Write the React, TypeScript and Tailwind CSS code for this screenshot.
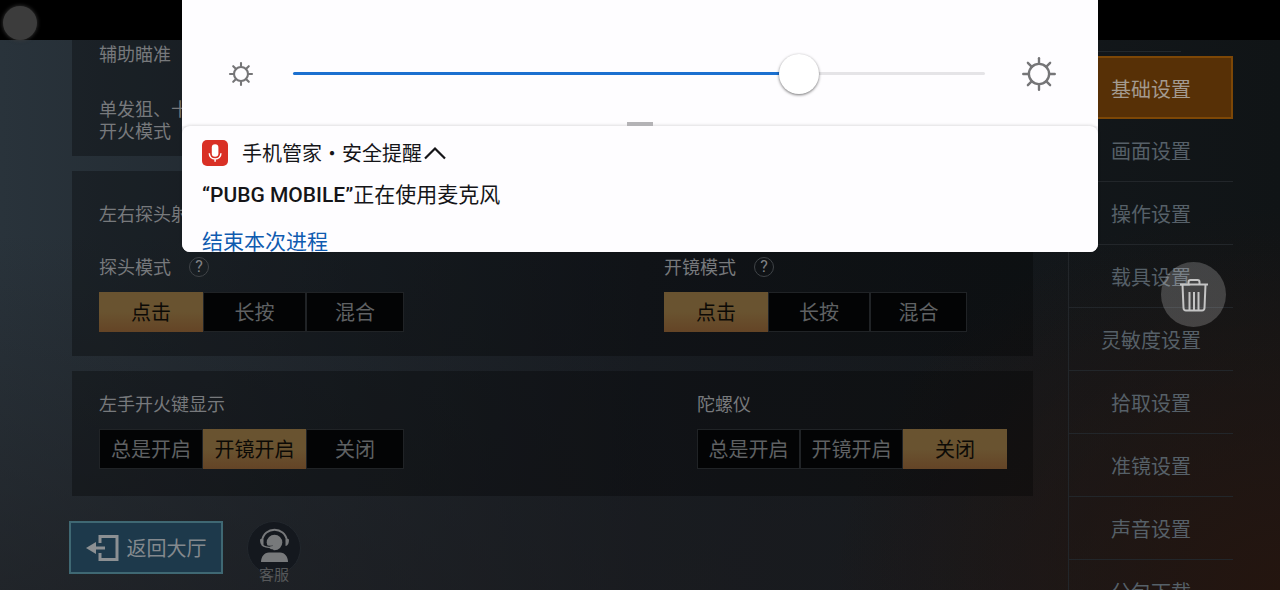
import { useState } from "react";

const tabs = ["基础设置", "画面设置", "操作设置", "载具设置", "灵敏度设置", "拾取设置", "准镜设置", "声音设置", "分包下载"];

const rays = [0, 45, 90, 135, 180, 225, 270, 315];

function Sun({ className, r, inner, outer }: { className: string; r: number; inner: number; outer: number }) {
  return (
    <svg viewBox="-16 -16 32 32" className={className} fill="none" stroke="#757577" strokeWidth="2.1" aria-hidden="true">
      <circle r={r} />
      {rays.map((a) => (
        <path key={a} d={`M0 ${-inner}V${-outer}`} transform={`rotate(${a})`} strokeLinecap="round" />
      ))}
    </svg>
  );
}

function Help() {
  return (
    <button
      type="button"
      aria-label="帮助"
      className="flex h-5 w-5 items-center justify-center rounded-full border border-[#3f4347] text-[16px] leading-none text-[#808285]"
    >
      ?
    </button>
  );
}

type SegmentProps = { label: string; help?: boolean; options: string[]; initial: number; widths?: string[] };

function Segment({ label, help, options, initial, widths = ["w-26", "w-[103px]", "w-[98px]"] }: SegmentProps) {
  const [value, setValue] = useState(initial);

  return (
    <div role="group" aria-label={label}>
      <div className="flex h-6 items-center gap-[18px] text-[18px] text-[#77797c]">
        <span>{label}</span>
        {help && <Help />}
      </div>
      <div className="mt-[13px] flex h-10 text-[20px]">
        {options.map((option, i) => (
          <button
            key={option}
            type="button"
            aria-pressed={value === i}
            onClick={() => setValue(i)}
            className={`pt-[2px] ${widths[i]} ${
              value === i
                ? "bg-linear-to-b from-[#695330] via-[#695330] to-[#644426] text-[#0c0a06]"
                : "border border-[#202326] bg-[#030405] text-[#5f6163]"
            }`}
          >
            {option}
          </button>
        ))}
      </div>
    </div>
  );
}

function BrightnessPanel() {
  const [level, setLevel] = useState(190);

  return (
    <div className="flex h-[126px] flex-col bg-[#fefdff]">
      <div className="mt-[54px] flex h-10 items-center pl-[43px] pr-[41px]">
        <Sun className="h-8 w-8" r={7} inner={7} outer={11} />
        <div className="relative mx-9 h-10 flex-1">
          <div className="absolute inset-x-0 top-[18px] h-[3px] rounded-full bg-[#e5e4e7]" />
          <div
            className="absolute left-0 top-[18px] h-[3px] rounded-full bg-[#1b70d0]"
            style={{ width: `${(level / 255) * 100}%` }}
          />
          <input
            type="range"
            aria-label="亮度"
            min={0}
            max={255}
            value={level}
            onChange={(e) => setLevel(Number(e.target.value))}
            className="absolute inset-0 h-10 w-full appearance-none bg-transparent [&::-webkit-slider-thumb]:h-10 [&::-webkit-slider-thumb]:w-10 [&::-webkit-slider-thumb]:appearance-none [&::-webkit-slider-thumb]:rounded-full [&::-webkit-slider-thumb]:bg-white [&::-webkit-slider-thumb]:shadow-[0_1px_3px_rgba(0,0,0,0.55)]"
          />
        </div>
        <Sun className="h-9 w-9" r={9} inner={9} outer={14} />
      </div>
      <div className="mx-auto mt-auto h-1 w-[26px] bg-[#b4b3b6]" />
    </div>
  );
}

function Notification() {
  return (
    <section className="h-[126px] overflow-hidden rounded-lg bg-[#fefdff] px-5 text-[#151518] shadow-[0_-1px_3px_rgba(0,0,0,0.12)]">
      <div className="mt-[13px] flex h-7 items-center">
        <svg viewBox="0 0 26 26" className="mr-[14px] h-[26px] w-[26px]" aria-hidden="true">
          <rect width="26" height="26" rx="5" fill="#d93025" />
          <rect x="9.8" y="4.2" width="6.6" height="12.6" rx="3.3" fill="#fff" />
          <path d="M7.3 13.2c0 3.6 2.5 5.8 5.8 5.8s5.8-2.2 5.8-5.8M13.1 19v2.8" fill="none" stroke="#fff" strokeWidth="1.5" />
        </svg>
        <span className="pt-[2px] text-[20px]">手机管家・安全提醒</span>
        <button type="button" aria-label="收起" className="ml-[2px]">
          <svg viewBox="0 0 22 14" className="h-[14px] w-[22px]" fill="none" stroke="currentColor" strokeWidth="2.2">
            <path d="M1 12.500 11 2.500l10 10" />
          </svg>
        </button>
      </div>
      <h2 className="mt-[14px] h-7 text-[21px] leading-7">
        <span className="font-medium">“PUBG MOBILE”</span>正在使用麦克风
      </h2>
      <a href="#end" className="mt-[19px] block h-7 text-[21px] leading-7 text-[#0f5bb0]">结束本次进程</a>
    </section>
  );
}

export default function App() {
  const [tab, setTab] = useState(0);

  return (
    <div className="relative flex h-screen flex-col overflow-hidden bg-linear-to-r from-[#29333b] via-[#171c22] via-50% to-[#101416] font-[Roboto,'Noto_Sans_CJK_SC',sans-serif]">
      <header className="h-10 shrink-0 bg-black" />

      <div className="flex min-h-0 flex-1 bg-[radial-gradient(ellipse_35%_70%_at_100%_100%,#24150f,transparent),linear-gradient(to_bottom,transparent_35%,#1b1b1e99)]">
        <main className="ml-[72px] mr-[35px] flex flex-1 flex-col gap-[15px]">
          <section className="h-[116px] shrink-0 bg-black/30 px-[27px] pt-[3px] text-[18px] text-[#77797c]">
            <p className="leading-6">辅助瞄准</p>
            <p className="mt-8 leading-[22px]">单发狙、十字弩<br />开火模式</p>
          </section>

          <section className="h-[185px] shrink-0 bg-black/30 px-[27px] pt-8">
            <p className="h-6 text-[18px] leading-6 text-[#77797c]">左右探头射击</p>
            <div className="mt-7 flex justify-between pr-[39px]">
              <Segment label="探头模式" help options={["点击", "长按", "混合"]} initial={0} />
              <Segment
                label="开镜模式"
                help
                options={["点击", "长按", "混合"]}
                initial={0}
                widths={["w-26", "w-[102px]", "w-[97px]"]}
              />
            </div>
          </section>

          <section className="flex h-[125px] shrink-0 justify-between bg-black/30 pl-[27px] pr-[26px] pt-[21px]">
            <Segment label="左手开火键显示" options={["总是开启", "开镜开启", "关闭"]} initial={1} />
            <Segment
              label="陀螺仪"
              options={["总是开启", "开镜开启", "关闭"]}
              initial={2}
              widths={["w-[103px]", "w-[103px]", "w-26"]}
            />
          </section>

          <div className="-ml-[3px] mt-[10px] flex items-start gap-6">
            <button
              type="button"
              className="flex h-[53px] w-[154px] items-center justify-center gap-2 border-2 border-[#3f6873] bg-[#1d394b] text-[20px] text-[#84898e]"
            >
              <svg viewBox="0 0 33 28" className="h-7 w-[33px]" fill="none" stroke="#8c9093" strokeWidth="3" aria-hidden="true">
                <path d="M14 9V2.500h17v23H14V19M9 14h10" />
                <path d="M0 14 10 8v12z" fill="#8c9093" stroke="none" />
              </svg>
              <span className="pt-[2px]">返回大厅</span>
            </button>
            <button type="button" className="flex w-[54px] flex-col items-center text-[15px] leading-4 text-[#56585a]">
              <svg viewBox="0 0 54 54" className="-mb-2 h-[54px] w-[54px]" aria-hidden="true">
                <circle cx="27" cy="27" r="26.5" fill="#14181e" stroke="#22272d" />
                <circle cx="27.500" cy="21.500" r="7.800" fill="#77797b" />
                <path d="M15 20C17 5 38 5 40 20" fill="none" stroke="#77797b" strokeWidth="1.900" />
                <path d="M13 18.500q2-1.500 3.500 0v6.500q-3.500 0-3.500-6.500zM42 18.500q-2-1.500-3.500 0v6.500q3.500 0 3.500-6.500z" fill="#77797b" />
                <path d="M17 25.500c3 1.500 6 1.500 9 1" fill="none" stroke="#14181e" strokeWidth="4" />
                <path d="M15 24c3 2.500 6 2.500 10 2.500" fill="none" stroke="#77797b" strokeWidth="1.600" />
                <ellipse cx="25.500" cy="26.500" rx="3" ry="1.600" fill="#77797b" />
                <path d="M14 41c0-5 3-9.500 8-9.500h11c5 0 8 4.500 8 9.500z" fill="#77797b" />
              </svg>
              <span>客服</span>
            </button>
          </div>
        </main>

        <aside className="mr-[47px] w-[165px] shrink-0 overflow-hidden border-l border-[#22262a]">
          <div className="mr-[52px] h-3 border-b border-[#23282c]" />
          <nav className="mt-1 flex flex-col">
            {tabs.map((name, i) => (
              <button
                key={name}
                type="button"
                aria-current={tab === i ? "page" : undefined}
                onClick={() => setTab(i)}
                className={`h-[63px] shrink-0 pt-1 text-[20px] ${
                  tab === i ? "border-2 border-[#7d4706] bg-[#573006] text-[#a39a90]" : "border-b border-[#22262a] text-[#566068]"
                }`}
              >
                {name}
              </button>
            ))}
          </nav>
        </aside>
      </div>

      {/* assistive ball */}
      <div className="absolute left-[3px] top-[6px] h-[34px] w-[34px] rounded-full bg-[#3c3c3c] shadow-[0_0_4px_#3c3c3c]" />

      <div className="absolute inset-x-[182px] top-0 rounded-b-lg bg-[#f6f5f8]">
        <BrightnessPanel />
        <Notification />
      </div>

      <button
        type="button"
        aria-label="删除"
        className="absolute right-[54px] top-[262px] flex h-[65px] w-[65px] items-center justify-center rounded-full bg-white/20"
      >
        <svg viewBox="0 0 30 34" className="h-[34px] w-[30px]" fill="none" stroke="#c4c4c4" strokeWidth="2" aria-hidden="true">
          <path d="M1 6.500h28M9.500 6.500V4q0-2 2-2h7q2 0 2 2v2.500M3.500 6.500 4.500 30q.2 2.500 2.500 2.500h16q2.300 0 2.500-2.500l1-23.500M10.500 14v18M19.500 14v18M15 14v18" />
        </svg>
      </button>
    </div>
  );
}
